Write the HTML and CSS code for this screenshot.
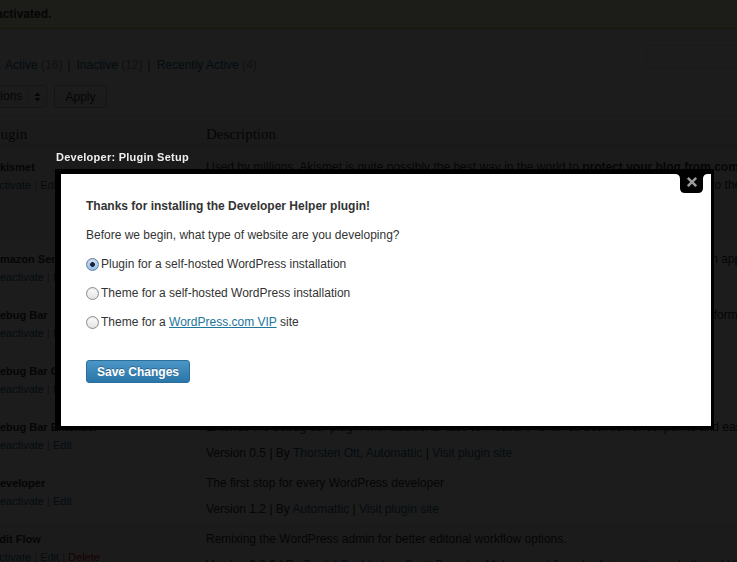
FILE: index.html
```html
<!DOCTYPE html>
<html>
<head>
<meta charset="utf-8">
<title>Plugins</title>
<link rel="stylesheet" href="styles.css">
</head>
<body>
<div class="page">
  <div class="notice">activated.</div>

  <div class="filters">
    <ul class="subsub">
      <li><a href="#">Active</a> <span class="count">(16)</span><span class="sep">|</span></li>
      <li><a href="#">Inactive</a> <span class="count">(12)</span><span class="sep">|</span></li>
      <li><a href="#">Recently Active</a> <span class="count">(4)</span></li>
    </ul>
    <div class="search"></div>
  </div>

  <div class="tablenav">
    <div class="select">
      <span class="select-label">Bulk Actions</span>
      <span class="select-arrows">
        <svg width="7" height="10" viewBox="0 0 7 10"><path d="M3.5 0.5 L6.5 4 H0.5 Z M3.5 9.5 L6.5 6 H0.5 Z" fill="#333"/></svg>
      </span>
    </div>
    <button class="apply" type="button">Apply</button>
  </div>

  <table class="plugins">
    <colgroup><col class="c1"><col class="c2"></colgroup>
    <thead>
      <tr><th class="th-name">Plugin</th><th>Description</th></tr>
    </thead>
    <tbody>
      <tr class="inactive">
        <td><strong class="pname">Akismet</strong><div class="actions"><a href="#">Activate</a> | <a href="#">Edit</a> | <a href="#" class="delete">Delete</a></div></td>
        <td><p class="desc">Used by millions, Akismet is quite possibly the best way in the world to <strong>protect your blog from comment and trackback spam</strong>. It keeps your site protected from spam even while you sleep.<br>To get started: 1) click the 'Activate' link to the left of this description, 2) Sign up for a key, 3) go to the Akismet configuration page, and save your API key.<br>Akismet checks your comments against the Akismet web service.</p>
        <div class="meta">Version 2.5.3 | By <a href="#">Automattic</a> | <a href="#">Visit plugin site</a></div></td>
      </tr>
      <tr>
        <td><strong class="pname">Amazon Services</strong><div class="actions"><a href="#">Deactivate</a> | <a href="#">Edit</a></div></td>
        <td><p class="desc">Connecting WordPress to Amazon Web Services so that other plugins can use them in your own applications.</p>
        <div class="meta">Version 0.2 | By <a href="#">Automattic</a> | <a href="#">Visit plugin site</a></div></td>
      </tr>
      <tr>
        <td><strong class="pname">Debug Bar</strong><div class="actions"><a href="#">Deactivate</a> | <a href="#">Edit</a></div></td>
        <td><p class="desc">Adds a debug menu to the admin bar that shows queries, cache, and other helpful debugging information.</p>
        <div class="meta">Version 0.8 | By <a href="#">wordpressdotorg</a> | <a href="#">Visit plugin site</a></div></td>
      </tr>
      <tr>
        <td><strong class="pname">Debug Bar Console</strong><div class="actions"><a href="#">Deactivate</a> | <a href="#">Edit</a></div></td>
        <td><p class="desc">Adds a PHP/MySQL console to the debug bar. Requires the debug bar plugin.</p>
        <div class="meta">Version 0.3 | By <a href="#">koopersmith</a> | <a href="#">Visit plugin site</a></div></td>
      </tr>
      <tr>
        <td><strong class="pname">Debug Bar Extender</strong><div class="actions"><a href="#">Deactivate</a> | <a href="#">Edit</a></div></td>
        <td><p class="desc">Extends the debug bar plugin with additional tabs to measure runtimes between checkpoints and easily lookup variable content.</p>
        <div class="meta">Version 0.5 | By <a href="#">Thorsten Ott, Automattic</a> | <a href="#">Visit plugin site</a></div></td>
      </tr>
      <tr>
        <td><strong class="pname">Developer</strong><div class="actions"><a href="#">Deactivate</a> | <a href="#">Edit</a></div></td>
        <td><p class="desc">The first stop for every WordPress developer</p>
        <div class="meta">Version 1.2 | By <a href="#">Automattic</a> | <a href="#">Visit plugin site</a></div></td>
      </tr>
      <tr class="inactive">
        <td><strong class="pname">Edit Flow</strong><div class="actions"><a href="#">Activate</a> | <a href="#">Edit</a> | <a href="#" class="delete">Delete</a></div></td>
        <td><p class="desc">Remixing the WordPress admin for better editorial workflow options.</p>
        <div class="meta">Version 0.6.3 | By <a href="#">Daniel Bachhuber, Scott Bressler, Mohammad Jangda, Automattic, and others</a> | <a href="#">Visit plugin site</a></div></td>
      </tr>
    </tbody>
  </table>
</div>

<div class="overlay"></div>

<div class="dialog">
  <div class="dialog-title">Developer: Plugin Setup</div>
  <div class="dialog-frame">
    <div class="dialog-body">
      <p class="lead">Thanks for installing the Developer Helper plugin!</p>
      <p class="line">Before we begin, what type of website are you developing?</p>
      <label class="option"><input type="radio" name="type" checked><span>Plugin for a self-hosted WordPress installation</span></label>
      <label class="option"><input type="radio" name="type"><span>Theme for a self-hosted WordPress installation</span></label>
      <label class="option"><input type="radio" name="type"><span>Theme for a <a href="#">WordPress.com VIP</a> site</span></label>
      <button class="save" type="button">Save Changes</button>
    </div>
    <a class="close" href="#" aria-label="Close">
      <svg width="33" height="19" viewBox="0 0 33 19">
        <path d="M0 0 H33 Q28 0 28 5 V14 Q28 19 23 19 H10 Q5 19 5 14 V5 Q5 0 0 0 Z" fill="#000"/>
        <path d="M12.8 3.8 L21.2 12.2 M21.2 3.8 L12.8 12.2" stroke="#9c9c9c" stroke-width="2.5"/>
      </svg>
    </a>
  </div>
</div>
</body>
</html>
```

FILE: styles.css
```css
* { box-sizing: border-box; }

html, body {
  margin: 0;
  padding: 0;
}

body {
  font-family: "Liberation Sans", Arial, sans-serif;
  font-size: 12px;
  color: #333;
  background: #f9f9f9;
  overflow: hidden;
}

a { color: #21759b; text-decoration: none; }

.page {
  width: 737px;
  height: 562px;
  overflow: hidden;
  background: #f9f9f9;
}

/* notice */
.notice {
  height: 29px;
  background: #ffffe0;
  border-bottom: 1px solid #e6db55;
  line-height: 28px;
  font-weight: bold;
  text-indent: -4px;
  white-space: nowrap;
}

/* filter links + search */
.filters {
  display: flex;
  margin-top: 16px;
  height: 28px;
}

.subsub {
  list-style: none;
  margin: 11px 0 0 5px;
  padding: 0;
  display: flex;
  line-height: 18px;
  white-space: nowrap;
  color: #666;
}

.count { color: #999; }

.sep {
  padding: 0 6px 0 5px;
  color: #666;
}

.search {
  margin-left: auto;
  margin-right: -40px;
  width: 131px;
  height: 23px;
  border: 1px solid #dfdfdf;
  border-radius: 3px;
  background: #fff;
}

/* bulk actions */
.tablenav {
  display: flex;
  margin-top: 12px;
  height: 23px;
}

.select {
  display: flex;
  width: 100px;
  height: 23px;
  margin-left: -53px;
  border: 1px solid #c9c9c9;
  border-radius: 4px;
  background: linear-gradient(#fff, #f0f0f0);
  white-space: nowrap;
  line-height: 21px;
}

.select-label {
  flex: 1;
  padding-left: 9px;
  overflow: hidden;
}

.select-arrows {
  width: 18px;
  border-left: 1px solid #d5d5d5;
  display: flex;
  align-items: center;
  justify-content: center;
}

.apply {
  margin-left: 7px;
  width: 53px;
  height: 23px;
  padding: 0;
  border: 1px solid #bbb;
  border-radius: 3px;
  background: linear-gradient(#fefefe, #f0f0f0);
  font-family: "Liberation Sans", Arial, sans-serif;
  font-size: 12px;
  color: #333;
}

/* plugin table */
.plugins {
  border-collapse: separate;
  border-spacing: 0;
  table-layout: fixed;
  width: 1400px;
  margin: 8px 0 0 -15px;
  border-top: 1px solid #dfdfdf;
}

.plugins col.c1 { width: 214px; }

.plugins th {
  font-family: "Liberation Serif", "Times New Roman", serif;
  font-weight: normal;
  font-size: 15px;
  text-align: left;
  color: #333;
  padding: 4px 7px 1px;
  line-height: 27px;
  background: linear-gradient(#f9f9f9, #ececec);
  border-bottom: 1px solid #dfdfdf;
}

.plugins th.th-name { padding-left: 3px; }

.plugins td {
  vertical-align: top;
  padding: 7px 7px 4px;
  border-top: 1px solid #fff;
  white-space: nowrap;
}

.plugins tr.inactive td { background: #f4f4f4; }

.pname {
  display: block;
  font-size: 11px;
  line-height: 18px;
}

.actions {
  font-size: 11px;
  line-height: 18px;
  color: #999;
}

.actions .delete { color: #bc0b0b; }

.desc {
  margin: 0;
  line-height: 18px;
}

.meta {
  margin-top: 8px;
  line-height: 18px;
}

/* overlay + dialog */
.overlay {
  position: fixed;
  top: 0;
  left: 0;
  right: 0;
  bottom: 0;
  background: rgba(0, 0, 0, 0.89);
}

.dialog {
  position: absolute;
  left: 55px;
  top: 146px;
}

.dialog-title {
  height: 23px;
  line-height: 23px;
  padding-left: 1px;
  color: #eee;
  font-size: 11px;
  font-weight: bold;
  letter-spacing: 0.25px;
  white-space: nowrap;
}

.dialog-frame {
  position: relative;
  background: #000;
  padding: 5px 3px 4px 6px;
}

.dialog-body {
  width: 650px;
  height: 252px;
  background: #fff;
  padding: 24px 25px;
  color: #333;
}

.dialog-body p {
  margin: 0 0 13px;
  line-height: 16px;
}

.lead { font-weight: bold; }

.option {
  display: flex;
  align-items: center;
  height: 16px;
  margin-bottom: 13px;
  line-height: 16px;
}

.option a { text-decoration: underline; }

.option input {
  appearance: none;
  -webkit-appearance: none;
  width: 13px;
  height: 13px;
  margin: 0 2px 0 0;
  border: 1px solid #8d8d8d;
  border-radius: 50%;
  background: linear-gradient(#ffffff, #e2e2e2);
  box-shadow: inset 0 1px 1px rgba(0, 0, 0, 0.12);
}

.option input:checked {
  border-color: #6a7f9c;
  background:
    radial-gradient(circle, #1c2133 0, #1c2133 2px, rgba(28, 33, 51, 0) 2.8px),
    linear-gradient(#d6e7f8, #8bbbe8);
}

.save {
  margin-top: 17px;
  height: 23px;
  padding: 0 10px;
  border: 1px solid #2a6e9c;
  border-radius: 3px;
  background: linear-gradient(#4b95c7, #2b76a8);
  color: #fff;
  font-family: "Liberation Sans", Arial, sans-serif;
  font-size: 12px;
  font-weight: bold;
  text-shadow: 0 -1px 0 rgba(0, 0, 0, 0.3);
}

.close {
  position: absolute;
  left: 620px;
  top: 5px;
  width: 33px;
  height: 19px;
  display: block;
}

.close svg { display: block; }
```
